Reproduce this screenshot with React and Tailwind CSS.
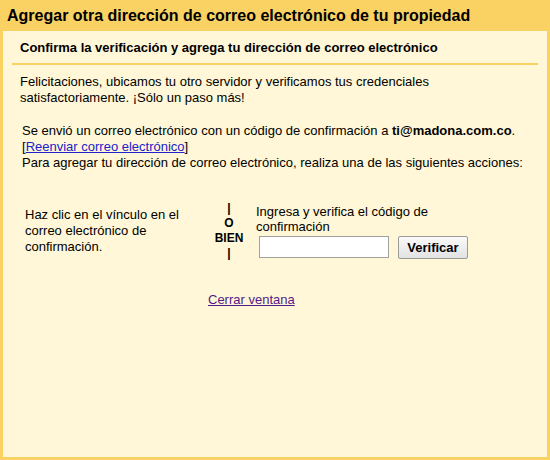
const App = () => {
  return (
    <div
      className="w-[550px] h-[460px] bg-[#fad163] px-[3px] pb-[3px] flex flex-col text-black"
      style={{ fontFamily: '"Liberation Sans", Arial, sans-serif' }}
    >
      <div className="h-[31px] pt-[6px] pl-[4px] text-[16px] leading-[20px] font-bold whitespace-nowrap">
        Agregar otra dirección de correo electrónico de tu propiedad
      </div>

      <div className="flex-1 bg-[#fff7d7] pt-[9px]">
        <div className="mx-[9px] pl-[8px] pb-[7px] border-b-2 border-[#fad163] text-[13px] leading-[16px] font-bold whitespace-nowrap">
          Confirma la verificación y agrega tu dirección de correo electrónico
        </div>

        <div className="pl-[17px] text-[13px] leading-[16px]">
          <p className="mt-[9px] whitespace-nowrap">
            Felicitaciones, ubicamos tu otro servidor y verificamos tus credenciales
            <br />
            satisfactoriamente. ¡Sólo un paso más!
          </p>

          <p className="mt-[17px] pl-[2px] whitespace-nowrap">
            Se envió un correo electrónico con un código de confirmación a{' '}
            <b>ti@madona.com.co</b>.
            <br />
            [<a href="#" className="text-[#2222cc] underline">Reenviar correo electrónico</a>]
            <br />
            Para agregar tu dirección de correo electrónico, realiza una de las siguientes acciones:
          </p>

          <div className="mt-[29px] h-[62px] flex items-center">
            <div className="ml-[5px] w-[177px]">
              Haz clic en el vínculo en el correo electrónico de confirmación.
            </div>

            <div className="w-[54px] text-center text-[12px] leading-[15px] font-bold">
              <div>|</div>
              <div>O</div>
              <div>BIEN</div>
              <div>|</div>
            </div>

            <div className="w-[215px] leading-[15px]">
              <div>Ingresa y verifica el código de confirmación</div>
              <div className="mt-[2px] flex items-center">
                <input
                  type="text"
                  className="ml-[3px] w-[130px] h-[22px] bg-white border border-[#a0a0a0] outline-none px-1 text-[13px]"
                />
                <button
                  type="button"
                  className="ml-[9px] w-[70px] h-[23px] rounded-[2px] border border-[#9a9a9a] bg-gradient-to-b from-[#fafafa] to-[#e2e2e2] text-[13px] font-bold leading-none"
                >
                  Verificar
                </button>
              </div>
            </div>
          </div>

          <div className="mt-[30px] ml-[188px]">
            <a href="#" className="text-[#551a8b] underline">Cerrar ventana</a>
          </div>
        </div>
      </div>
    </div>
  );
};

export default App;
